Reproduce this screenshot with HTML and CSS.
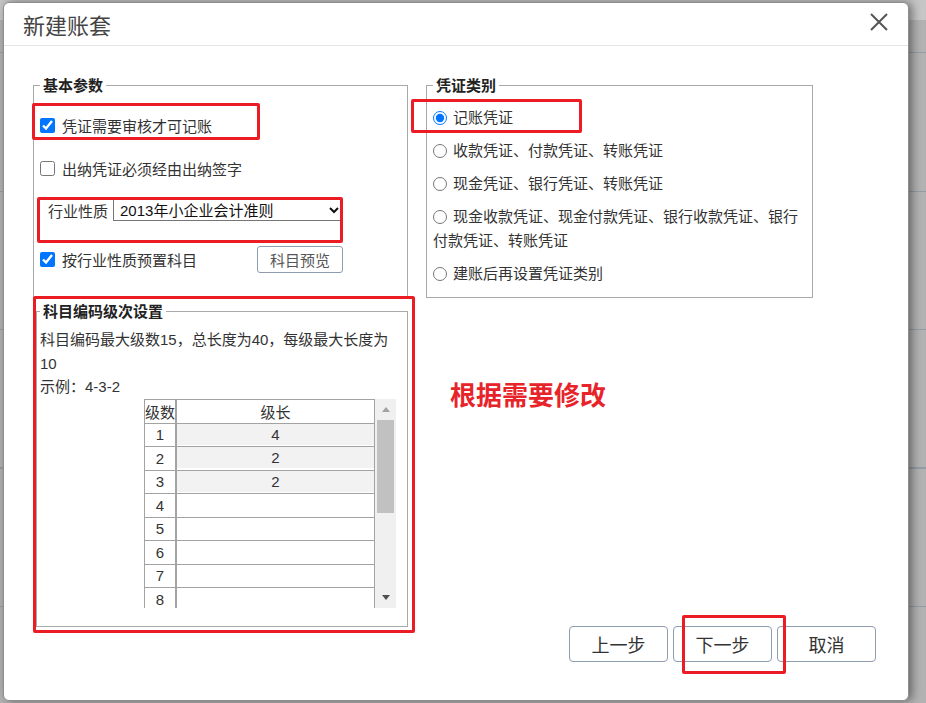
FILE: index.html
```html
<!DOCTYPE html>
<html lang="zh-CN">
<head>
  <meta charset="UTF-8" />
  <title>新建账套</title>
  <link rel="stylesheet" href="styles.css">
</head>
<body>
  <div class="dialog">
    <div class="dlg-head">
      <span class="dlg-title">新建账套</span>
      <button class="dlg-close" aria-label="关闭">
        <svg width="18" height="18" viewBox="0 0 18 18"><path d="M1 1 L17 17 M17 1 L1 17" stroke="#555" stroke-width="2" fill="none"/></svg>
      </button>
    </div>

    <div class="dlg-body">
      <div class="col-left">
        <fieldset class="box box-basic">
          <legend>基本参数</legend>
          <label class="opt"><input type="checkbox" checked>凭证需要审核才可记账</label>
          <label class="opt"><input type="checkbox">出纳凭证必须经由出纳签字</label>
          <div class="industry">
            <span>行业性质</span>
            <select><option>2013年小企业会计准则</option></select>
          </div>
          <div class="preset">
            <label class="opt"><input type="checkbox" checked>按行业性质预置科目</label>
            <button class="btn-sm">科目预览</button>
          </div>
        </fieldset>

        <fieldset class="box box-code">
          <legend>科目编码级次设置</legend>
          <p class="hint">科目编码最大级数15，总长度为40，每级最大长度为10<br>示例：4-3-2</p>
          <div class="grid-wrap">
            <div class="grid-view">
              <table class="grid">
                <colgroup><col class="c-no"><col class="c-len"></colgroup>
                <tr class="head"><th>级数</th><th>级长</th></tr>
                <tr><td>1</td><td class="v"><span class="val">4</span></td></tr>
                <tr><td>2</td><td class="v"><span class="val">2</span></td></tr>
                <tr><td>3</td><td class="v"><span class="val">2</span></td></tr>
                <tr><td>4</td><td></td></tr>
                <tr><td>5</td><td></td></tr>
                <tr><td>6</td><td></td></tr>
                <tr><td>7</td><td></td></tr>
                <tr><td>8</td><td></td></tr>
              </table>
            </div>
            <div class="vscroll">
              <span class="arr up"></span>
              <span class="thumb"></span>
              <span class="track"></span>
              <span class="arr down"></span>
            </div>
          </div>
        </fieldset>
      </div>

      <div class="col-right">
        <fieldset class="box box-type">
          <legend>凭证类别</legend>
          <label class="radio"><input type="radio" name="vt" checked>记账凭证</label>
          <label class="radio"><input type="radio" name="vt">收款凭证、付款凭证、转账凭证</label>
          <label class="radio"><input type="radio" name="vt">现金凭证、银行凭证、转账凭证</label>
          <label class="radio"><input type="radio" name="vt">现金收款凭证、现金付款凭证、银行收款凭证、银行付款凭证、转账凭证</label>
          <label class="radio"><input type="radio" name="vt">建账后再设置凭证类别</label>
        </fieldset>

        <div class="actions">
          <button>上一步</button>
          <button>下一步</button>
          <button>取消</button>
        </div>
      </div>
    </div>

    <!-- annotations -->
    <div class="mark m1"></div>
    <div class="mark m2"></div>
    <div class="mark m3"></div>
    <div class="mark m4"></div>
    <div class="mark m5"></div>
    <div class="note">根据需要修改</div>
  </div>
</body>
</html>
```

FILE: styles.css
```css
* {
  box-sizing: border-box;
}

html, body {
  margin: 0;
  height: 100%;
}

body {
  overflow: hidden;
  font-family: "Liberation Sans", "Noto Sans CJK SC", sans-serif;
  font-size: 15px;
  color: #333;
  background:
    linear-gradient(to bottom, #c6c6c6 0, #c6c6c6 20px, transparent 20px),
    repeating-linear-gradient(to bottom, transparent 0, transparent 52px, #939ca6 52px, #939ca6 53px, transparent 53px, transparent 138.5px),
    #b2b2b2;
}

.dialog {
  position: relative;
  width: 906px;
  height: 699px;
  margin: 2px 0 0 3px;
  background: #fff;
  border: 1px solid #8f8f8f;
  border-radius: 6px;
  box-shadow: 3px 0 10px rgba(0, 0, 0, 0.45);
  display: flex;
  flex-direction: column;
}

/* header */
.dlg-head {
  height: 43px;
  flex-shrink: 0;
  border-bottom: 1px solid #e5e5e5;
  display: flex;
  align-items: center;
  justify-content: space-between;
  padding: 0 20px 0 19px;
}

.dlg-title {
  font-family: "Noto Sans CJK SC", sans-serif;
  font-size: 22px;
  color: #444;
  margin-bottom: 1px;
}

.dlg-close {
  width: 18px;
  height: 18px;
  padding: 0;
  border: 0;
  background: none;
  margin-bottom: 5px;
}

.dlg-close svg {
  display: block;
}

/* body */
.dlg-body {
  flex: 1;
  display: flex;
  gap: 18px;
  padding: 29px 32px 38px 29px;
}

.col-left {
  width: 375px;
  display: flex;
  flex-direction: column;
}

.col-right {
  flex: 1;
  display: flex;
  flex-direction: column;
}

.box {
  margin: 0;
  min-width: 0;
  border: 1px solid #a9a9a9;
}

.box legend {
  padding: 0 3px;
  margin: 0;
  font-family: "Noto Sans CJK SC", sans-serif;
  font-weight: bold;
  line-height: 20px;
  color: #222;
}

.box-basic {
  padding: 15px 6px 25px 6px;
}

.opt {
  display: flex;
  align-items: center;
  gap: 7px;
  height: 30px;
}

.opt input {
  width: 15px;
  height: 15px;
  margin: 0;
}

.opt + .opt {
  margin-top: 13px;
}

.industry {
  display: flex;
  align-items: center;
  gap: 5px;
  height: 26px;
  margin-top: 14px;
  padding-left: 8px;
}

.industry select {
  width: 230px;
  height: 22px;
  padding: 0 0 0 2px;
  font: inherit;
  color: #111;
  background: #fff;
  border: 1px solid #767676;
  border-radius: 0;
}

.preset {
  display: flex;
  align-items: center;
  height: 26px;
  margin-top: 23px;
}

.preset .opt {
  height: 26px;
}

.btn-sm {
  margin-left: 60px;
  width: 86px;
  height: 27px;
  padding: 0;
  font: inherit;
  color: #555;
  background: #fff;
  border: 1px solid #8e9cb0;
  border-radius: 3px;
}

/* coding levels */
.box-code {
  margin: 3px 0 0 3px;
  padding: 7px 3px 18px 3px;
}

.hint {
  margin: 0;
  line-height: 23.5px;
}

.grid-wrap {
  display: flex;
  height: 209px;
  margin-left: 104px;
}

.grid-view {
  width: 231px;
  overflow: hidden;
}

.grid {
  width: 231px;
  table-layout: fixed;
  border-collapse: separate;
  border-spacing: 0;
  border-top: 1px solid #a3a3a3;
  border-left: 1px solid #a3a3a3;
}

.grid .c-no {
  width: 32px;
}

.grid .c-len {
  width: 198px;
}

.grid th,
.grid td {
  height: 23.5px;
  padding: 0;
  text-align: center;
  font-weight: normal;
  border-right: 1px solid #a3a3a3;
  border-bottom: 1px solid #a3a3a3;
}

.grid .head th {
  height: 24px;
  font-family: "Noto Sans CJK SC", sans-serif;
}

.grid td:first-child,
.grid th:first-child {
  border-right-width: 2px;
}

.grid td.v {
  vertical-align: top;
}

.grid .val {
  display: block;
  height: 21px;
  line-height: 21px;
  background: #f2f2f2;
}

.vscroll {
  width: 21px;
  background: #f0f0f0;
  display: flex;
  flex-direction: column;
  align-items: center;
}

.vscroll .arr {
  height: 21px;
  width: 100%;
  display: flex;
  align-items: center;
  justify-content: center;
}

.vscroll .arr::before {
  content: "";
  border-left: 4.5px solid transparent;
  border-right: 4.5px solid transparent;
}

.vscroll .up::before {
  border-bottom: 5px solid #a3a3a3;
}

.vscroll .down::before {
  border-top: 5px solid #505050;
}

.vscroll .thumb {
  width: 17px;
  height: 93px;
  background: #c1c1c1;
}

.vscroll .track {
  flex: 1;
}

/* voucher types */
.box-type {
  width: 387px;
  padding: 11px 6px 11px 6px;
}

.radio {
  display: block;
  line-height: 24px;
  margin-bottom: 9px;
}

.radio:last-child {
  margin-bottom: 0;
}

.radio input {
  width: 14px;
  height: 14px;
  margin: 0 6px 0 0;
  vertical-align: -2px;
}

.actions {
  margin-top: auto;
  display: flex;
  justify-content: flex-end;
  gap: 5px;
}

.actions button {
  width: 99px;
  height: 36px;
  padding: 0;
  font-family: "Noto Sans CJK SC", sans-serif;
  font-size: 18px;
  color: #333;
  background: #fff;
  border: 1px solid #8e9cb0;
  border-radius: 4px;
}

/* red annotations drawn over the screenshot */
.mark {
  position: absolute;
  border: 3px solid #ec1c24;
  border-radius: 2px;
  pointer-events: none;
}

.m1 { left: 28px; top: 100px; width: 228px; height: 37px; }
.m2 { left: 33px; top: 194px; width: 306px; height: 46px; }
.m3 { left: 29px; top: 293px; width: 382px; height: 337px; }
.m4 { left: 407px; top: 96px; width: 171px; height: 34px; }
.m5 { left: 678px; top: 612px; width: 104px; height: 59px; }

.note {
  position: absolute;
  left: 446px;
  top: 376px;
  font-family: "Noto Sans CJK SC", sans-serif;
  font-size: 26px;
  font-weight: bold;
  line-height: 30px;
  color: #e8242b;
}
```
